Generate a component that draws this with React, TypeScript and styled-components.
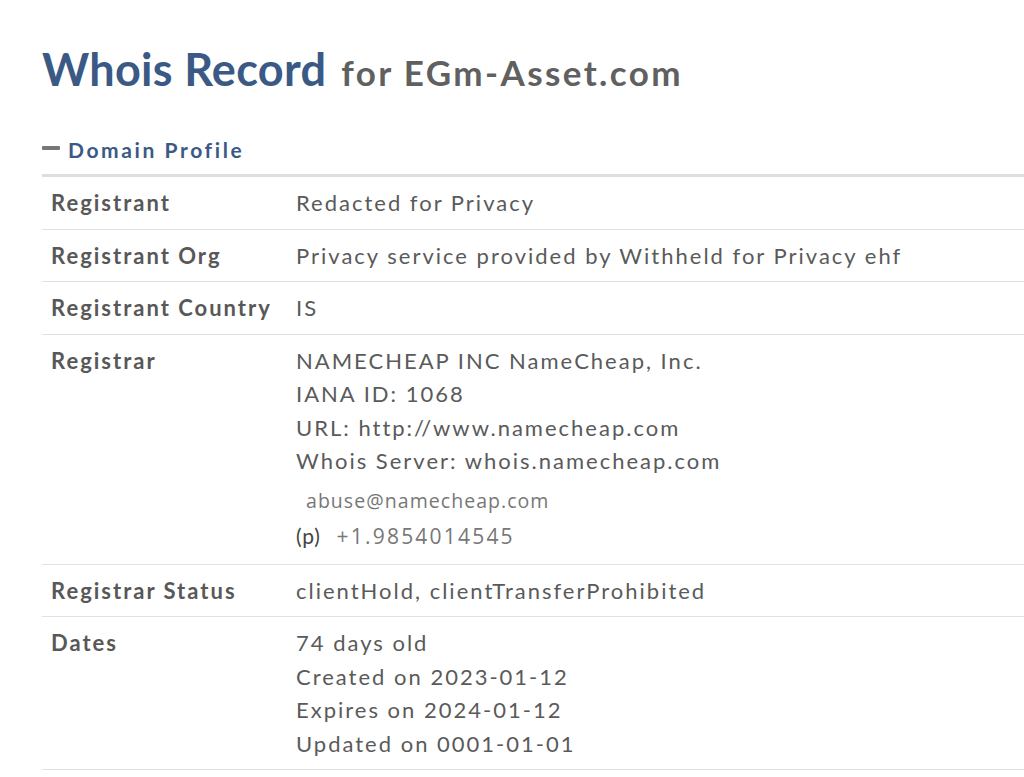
import React from "react";
import styled, { createGlobalStyle } from "styled-components";

const Global = createGlobalStyle`
  html, body { margin: 0; padding: 0; background: #fff; overflow: hidden; }
  body { font-family: Lato, "Open Sans", sans-serif; color: #555; }
`;

const Page = styled.main`
  padding: 42px 0 0 42px;
`;

const Title = styled.h1`
  margin: 0;
  font-size: 45px;
  line-height: 1.2;
  font-weight: 700;
  color: #3a5a85;
  letter-spacing: 0.3px;
`;

const TitleSub = styled.span`
  margin-left: 4px;
  font-size: 35px;
  color: #606060;
  letter-spacing: 2.4px;
`;

const SectionHead = styled.h2`
  margin: 41px 0 0 0;
  display: flex;
  align-items: center;
  gap: 8px;
  font-size: 21px;
  line-height: 1.2;
  font-weight: 700;
  color: #3a5a85;
  letter-spacing: 2.6px;
  padding-bottom: 12px;
  border-bottom: 3px solid #dedede;
`;

const Dash = styled.span`
  display: inline-block;
  width: 18px;
  height: 4px;
  border-radius: 1px;
  background: #777;
  margin-bottom: 3px;
`;

const Row = styled.div`
  display: grid;
  grid-template-columns: 245px 1fr;
  padding: 9px 0 9px 9px;
  border-bottom: 1px solid #e2e2e2;
  font-size: 22px;
  line-height: 33.5px;
  letter-spacing: 2px;
`;

const Label = styled.div`
  font-weight: 700;
  color: #585858;
`;

const Value = styled.div`
  color: #5a5a5a;
`;

const Line = styled.div``;

const Contact = styled.div`
  padding-top: 6px;
  letter-spacing: normal;
`;

const Email = styled.div`
  font-family: "Open Sans", "Liberation Sans", sans-serif;
  font-size: 19.5px;
  line-height: 33px;
  color: #777;
  padding-left: 10px;
  letter-spacing: 1.05px;
`;

const Phone = styled.div`
  display: flex;
  align-items: baseline;
  gap: 16px;
  line-height: 38px;
`;

const PhoneTag = styled.span`
  font-size: 21px;
  color: #444;
  letter-spacing: 0.8px;
`;

const PhoneNum = styled.span`
  font-family: "Open Sans", "Liberation Sans", sans-serif;
  font-size: 21px;
  color: #777;
  letter-spacing: 2.2px;
`;

type Rec = { label: string; lines: string[]; contact?: boolean };

const records: Rec[] = [
  { label: "Registrant", lines: ["Redacted for Privacy"] },
  { label: "Registrant Org", lines: ["Privacy service provided by Withheld for Privacy ehf"] },
  { label: "Registrant Country", lines: ["IS"] },
  {
    label: "Registrar",
    lines: [
      "NAMECHEAP INC NameCheap, Inc.",
      "IANA ID: 1068",
      "URL: http://www.namecheap.com",
      "Whois Server: whois.namecheap.com",
    ],
    contact: true,
  },
  { label: "Registrar Status", lines: ["clientHold, clientTransferProhibited"] },
  {
    label: "Dates",
    lines: ["74 days old", "Created on 2023-01-12", "Expires on 2024-01-12", "Updated on 0001-01-01"],
  },
];

export default function App() {
  return (
    <>
      <Global />
      <Page>
        <Title>
          Whois Record<TitleSub> for EGm-Asset.com</TitleSub>
        </Title>
        <SectionHead>
          <Dash />
          Domain Profile
        </SectionHead>
        {records.map((r) => (
          <Row key={r.label}>
            <Label>{r.label}</Label>
            <Value>
              {r.lines.map((l) => (
                <Line key={l}>{l}</Line>
              ))}
              {r.contact && (
                <Contact>
                  <Email>abuse@namecheap.com</Email>
                  <Phone>
                    <PhoneTag>(p)</PhoneTag>
                    <PhoneNum>+1.9854014545</PhoneNum>
                  </Phone>
                </Contact>
              )}
            </Value>
          </Row>
        ))}
      </Page>
    </>
  );
}
